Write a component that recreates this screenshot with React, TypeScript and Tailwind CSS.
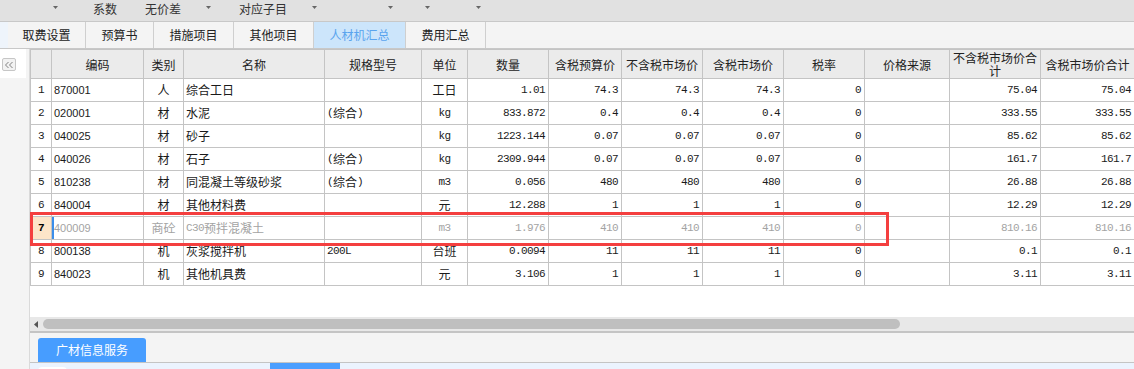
import React from 'react';

const CJK = "font-['Noto_Sans_CJK_SC',sans-serif]";
const MONO = "font-['Liberation_Mono',monospace] text-[11px] tracking-[-0.6px]";
const CODE = "font-['Liberation_Sans',sans-serif] text-[11px]";

type Kind = 'idx' | 'code' | 'center' | 'text' | 'num';

interface Col {
  label: string;
  w: string;
  kind: Kind;
}

const cols: Col[] = [
  { label: '', w: 'w-[21px]', kind: 'idx' },
  { label: '编码', w: 'w-[92px]', kind: 'code' },
  { label: '类别', w: 'w-[40px]', kind: 'center' },
  { label: '名称', w: 'w-[141px]', kind: 'text' },
  { label: '规格型号', w: 'w-[97px]', kind: 'text' },
  { label: '单位', w: 'w-[46px]', kind: 'center' },
  { label: '数量', w: 'w-[81px]', kind: 'num' },
  { label: '含税预算价', w: 'w-[73px]', kind: 'num' },
  { label: '不含税市场价', w: 'w-[81px]', kind: 'num' },
  { label: '含税市场价', w: 'w-[81px]', kind: 'num' },
  { label: '税率', w: 'w-[81px]', kind: 'num' },
  { label: '价格来源', w: 'w-[85px]', kind: 'text' },
  { label: '不含税市场价合计', w: 'w-[91px]', kind: 'num' },
  { label: '含税市场价合计', w: 'w-[94px]', kind: 'num' },
];

const rows: string[][] = [
  ['870001', '人', '综合工日', '', '工日', '1.01', '74.3', '74.3', '74.3', '0', '', '75.04', '75.04'],
  ['020001', '材', '水泥', '(综合)', 'kg', '833.872', '0.4', '0.4', '0.4', '0', '', '333.55', '333.55'],
  ['040025', '材', '砂子', '', 'kg', '1223.144', '0.07', '0.07', '0.07', '0', '', '85.62', '85.62'],
  ['040026', '材', '石子', '(综合)', 'kg', '2309.944', '0.07', '0.07', '0.07', '0', '', '161.7', '161.7'],
  ['810238', '材', '同混凝土等级砂浆', '(综合)', 'm3', '0.056', '480', '480', '480', '0', '', '26.88', '26.88'],
  ['840004', '材', '其他材料费', '', '元', '12.288', '1', '1', '1', '0', '', '12.29', '12.29'],
  ['400009', '商砼', 'C30预拌混凝土', '', 'm3', '1.976', '410', '410', '410', '0', '', '810.16', '810.16'],
  ['800138', '机', '灰浆搅拌机', '200L', '台班', '0.0094', '11', '11', '11', '0', '', '0.1', '0.1'],
  ['840023', '机', '其他机具费', '', '元', '3.106', '1', '1', '1', '0', '', '3.11', '3.11'],
];

const SELECTED = 6;

const alignFor: Record<Kind, string> = {
  idx: 'justify-center',
  code: 'justify-start pl-[2px]',
  center: 'justify-center',
  text: 'justify-start pl-[2px]',
  num: 'justify-end pr-[3px]',
};

// ascii parts get the narrow font, cjk parts stay 12px
const Mixed = ({ text }: { text: string }) => (
  <>
    {text
      .split(/([\x00-\x7f]+)/)
      .filter(Boolean)
      .map((part, i) =>
        /^[\x00-\x7f]+$/.test(part) ? (
          <span key={i} className={MONO}>
            {part}
          </span>
        ) : (
          <span key={i}>{part}</span>
        )
      )}
  </>
);

const Caret = () => (
  <svg width="5" height="3" viewBox="0 0 5 3" className="mt-[6px] shrink-0">
    <path d="M0 0H5L2.5 3Z" fill="#666" />
  </svg>
);

const tabs = [
  { label: '取费设置', w: 'w-[78px]' },
  { label: '预算书', w: 'w-[68px]' },
  { label: '措施项目', w: 'w-[80px]' },
  { label: '其他项目', w: 'w-[80px]' },
  { label: '人材机汇总', w: 'w-[92px]', active: true },
  { label: '费用汇总', w: 'w-[80px]' },
];

const App: React.FC = () => {
  return (
    <div className={`w-[1134px] h-[369px] overflow-hidden bg-[#f4f4f4] text-[12px] text-[#222] ${CJK}`}>
      {/* top strip */}
      <div className="h-[22px] bg-[#e1e1e1] border-b border-[#c8c8c8] flex items-start leading-[17px] text-[#333]">
        <div className="w-[53px] shrink-0" />
        <Caret />
        <div className="w-[35px] shrink-0" />
        <span>系数</span>
        <div className="w-[28px] shrink-0" />
        <span>无价差</span>
        <div className="w-[25px] shrink-0" />
        <Caret />
        <div className="w-[28px] shrink-0" />
        <span>对应子目</span>
        <div className="w-[25px] shrink-0" />
        <Caret />
        <div className="w-[71px] shrink-0" />
        <Caret />
        <div className="w-[32px] shrink-0" />
        <Caret />
        <div className="w-[46px] shrink-0" />
        <Caret />
      </div>

      {/* tabs */}
      <div className="h-[27px] bg-[#f4f4f4] border-b border-[#c8c8c8] flex">
        <div className="w-[8px] bg-[#eef4fb]" />
        {tabs.map((t) => (
          <div
            key={t.label}
            className={`${t.w} h-full border-r border-[#cfcfcf] flex items-center justify-center ${
              t.active ? 'bg-[#cce5fb] text-[#5aa4ee]' : 'text-[#222]'
            }`}
          >
            {t.label}
          </div>
        ))}
      </div>

      <div className="flex">
        {/* side rail */}
        <div className="w-[30px] shrink-0 h-[320px] border-r border-[#dadada] bg-[#f4f4f4]">
          <div className="w-[26px] h-[29px] bg-white pt-[9px] pl-[2px]">
            <div className="w-[14px] h-[13px] rounded-[2px] border border-[#c6c6c6] bg-[#f2f2f2] flex items-center justify-center">
              <svg width="10" height="8" viewBox="0 0 10 8">
                <path d="M4.5 1L1.5 4L4.5 7M8.5 1L5.5 4L8.5 7" stroke="#808080" strokeWidth="1" fill="none" />
              </svg>
            </div>
          </div>
        </div>

        <div className="flex-1 min-w-0 flex flex-col">
          {/* grid */}
          <div className="relative h-[268px] bg-white overflow-hidden">
            <div className="w-max border-l border-t border-[#c4c4c4]">
              <div className="flex h-[29px] border-b border-[#c4c4c4] bg-[#ebebeb]">
                {cols.map((c, i) => (
                  <div
                    key={i}
                    className={`${c.w} h-full shrink-0 border-r border-[#c4c4c4] flex items-center justify-center text-center leading-[13px] px-[2px]`}
                  >
                    {c.label}
                  </div>
                ))}
              </div>

              {rows.map((r, ri) => {
                const sel = ri === SELECTED;
                const cells = [String(ri + 1), ...r];
                return (
                  <div
                    key={ri}
                    className={`flex h-[23px] border-b border-[#c4c4c4] ${sel ? 'text-[#a3a3a3]' : 'text-[#1a1a1a]'}`}
                  >
                    {cols.map((c, ci) => {
                      const v = cells[ci];
                      let extra = '';
                      if (c.kind === 'idx' && sel) extra = 'bg-[#fde5c9] font-bold text-black';
                      if (c.kind === 'code' && sel) extra = 'shadow-[inset_2px_0_0_#3b8eea]';
                      return (
                        <div
                          key={ci}
                          className={`${c.w} h-full shrink-0 border-r border-[#c4c4c4] flex items-center whitespace-nowrap overflow-hidden ${alignFor[c.kind]} ${extra}`}
                        >
                          {c.kind === 'code' ? (
                            <span className={CODE}>{v}</span>
                          ) : c.kind === 'num' || c.kind === 'idx' ? (
                            <span className={MONO}>{v}</span>
                          ) : (
                            <Mixed text={v} />
                          )}
                        </div>
                      );
                    })}
                  </div>
                );
              })}
            </div>

            {/* highlight box */}
            <div className="absolute left-0 top-[163px] w-[859px] h-[34px] border-[3px] border-[#f43f3f] pointer-events-none" />
          </div>

          {/* horizontal scrollbar */}
          <div className="h-[14px] bg-[#e8e8e8] flex items-center">
            <svg width="4" height="7" viewBox="0 0 4 7" className="ml-[4px] shrink-0">
              <path d="M4 0L0 3.5L4 7Z" fill="#555" />
            </svg>
            <div className="ml-[5px] w-[857px] h-[10px] rounded-full bg-[#bfbfbf]" />
          </div>

          {/* bottom panel */}
          <div className="h-[32px] border-t-2 border-b border-[#c4c4c4] bg-[#f4f4f4] flex items-end pl-[8px]">
            <div className="w-[108px] h-[24px] rounded-t-[3px] bg-[#479dff] text-white flex items-center justify-center">
              广材信息服务
            </div>
          </div>
          <div className="h-[8px] bg-[#ebf3fe] flex items-start">
            <div className="ml-[8px] mt-[4px] w-[29px] h-[6px] rounded-t-[4px] bg-white" />
            <div className="ml-[203px] w-[70px] h-full bg-[#4a9eff]" />
          </div>
        </div>
      </div>
    </div>
  );
};

export default App;
